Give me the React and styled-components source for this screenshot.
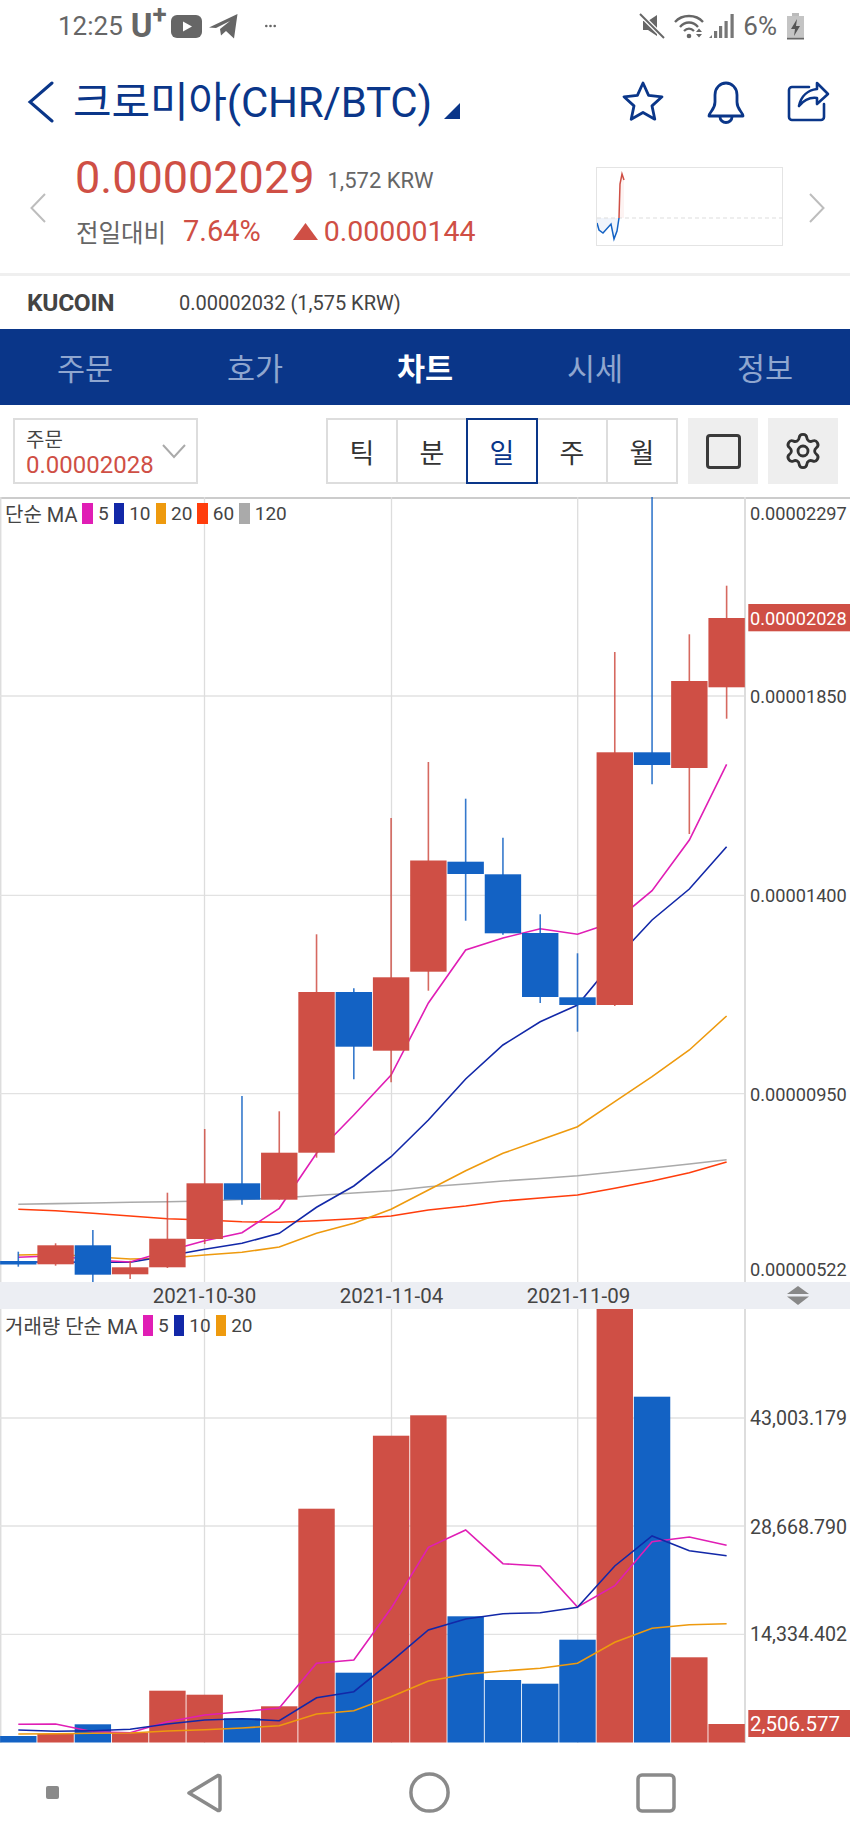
import React from 'react'
import styled, { createGlobalStyle } from 'styled-components'
import { Settings } from 'lucide-react'

const NAVY = '#0a3689'
const RED = '#cf4f45'
const BLUE = '#1362c4'
const TEXT = '#444'
const FONT = 'Roboto, "Noto Sans CJK KR", sans-serif'

const MA_COLORS = { 5: '#e01eb5', 10: '#1228a8', 20: '#ee9a0e', 60: '#ff3d0c', 120: '#aaaaaa' }

// x position of a day slot, slots are 37.28px wide
const slotX = (i) => 18.3 + 37.28 * i

// [open/close top, bottom, wick top, wick bottom, colour]
const candles = [
  [1261, 1264.5, 1251.7, 1266.7, 'b'],
  [1245.3, 1264.3, 1243.3, 1265.7, 'r'],
  [1245.3, 1274.7, 1230, 1282, 'b'],
  [1267.3, 1274.3, 1260.7, 1279, 'r'],
  [1238.7, 1267.3, 1192.7, 1268, 'r'],
  [1183.3, 1239, 1129, 1244, 'r'],
  [1183.3, 1199.7, 1096, 1204.7, 'b'],
  [1152.7, 1199.7, 1111.3, 1199.7, 'r'],
  [992, 1152.7, 934.3, 1157.7, 'r'],
  [992, 1046.7, 988.3, 1079.3, 'b'],
  [977.3, 1050.7, 818, 1082.3, 'r'],
  [860.5, 971.7, 762, 990.7, 'r'],
  [861.7, 874, 798.7, 920.7, 'b'],
  [874.3, 933.3, 837.7, 934.7, 'b'],
  [933, 997, 914.3, 1003, 'b'],
  [997.3, 1005, 953.3, 1031.7, 'b'],
  [752.3, 1005, 652, 1006, 'r'],
  [752.3, 765, 497, 784.3, 'b'],
  [681, 768, 634.3, 834, 'r'],
  [618, 687.3, 585.7, 718.7, 'r'],
]

const priceLines = [
  { color: MA_COLORS[120], ys: [1204.3, 1203.6, 1203, 1202.3, 1201.7, 1201, 1199.5, 1198, 1195.5, 1193, 1190.7, 1186.7, 1184, 1181, 1178.5, 1175.7, 1172, 1168, 1164, 1159.7] },
  { color: MA_COLORS[60], ys: [1209.3, 1210.7, 1213.3, 1216, 1218.7, 1220, 1221.7, 1222.3, 1220.7, 1218.7, 1216, 1210, 1206, 1201, 1198, 1195, 1188.3, 1181, 1172.7, 1162] },
  { color: MA_COLORS[20], ys: [1255, 1254.3, 1256.7, 1259, 1258.3, 1255, 1252.3, 1247, 1233.3, 1223.3, 1209.3, 1190, 1170.7, 1153.3, 1140, 1126.7, 1101.7, 1076.7, 1050, 1016] },
  { color: MA_COLORS[10], ys: [1262, 1262, 1262.3, 1262.3, 1256, 1249.3, 1243.3, 1233.3, 1207.3, 1186, 1156.7, 1120, 1079, 1045, 1021.7, 1005, 960, 920, 889, 846.7] },
  { color: MA_COLORS[5], ys: [1257.3, 1255.7, 1260, 1262, 1251, 1240.7, 1232.7, 1208.3, 1153.3, 1115, 1075, 1003, 950, 938, 928.7, 934.3, 921.7, 890.7, 840, 764.3] },
]

const volumes = [
  [1736, 'b'], [1734, 'r'], [1724.3, 'b'], [1732.7, 'r'], [1690.7, 'r'], [1694.7, 'r'], [1718.3, 'b'],
  [1706.3, 'r'], [1508.7, 'r'], [1672.7, 'b'], [1435.7, 'r'], [1415.3, 'r'], [1616.3, 'b'], [1680, 'b'],
  [1683.7, 'b'], [1639.7, 'b'], [1300, 'r'], [1396.7, 'b'], [1657.3, 'r'], [1724, 'r'],
]

const volumeLines = [
  { color: MA_COLORS[5], ys: [1724.3, 1724, 1731.7, 1732.7, 1721.7, 1715, 1711.7, 1708, 1663.3, 1660, 1608.3, 1547.3, 1530, 1563.7, 1566, 1607, 1585.7, 1541.7, 1537, 1545.3] },
  { color: MA_COLORS[10], ys: [1730, 1731.3, 1730.7, 1729.3, 1724, 1720, 1718.7, 1720.7, 1697.7, 1691.7, 1661.7, 1630, 1619, 1613.7, 1612.7, 1607.3, 1566, 1536, 1550.7, 1555.7] },
  { color: MA_COLORS[20], ys: [1734, 1733.7, 1733.3, 1733, 1731, 1729.7, 1728, 1725.7, 1714, 1710.7, 1696.7, 1681, 1674.3, 1671, 1668.3, 1663.3, 1642.3, 1628.3, 1624.7, 1623.7] },
]

const toPoints = (ys) => ys.map((y, i) => `${slotX(i)},${y}`).join(' ')

const GlobalStyle = createGlobalStyle`
  html, body { margin: 0; padding: 0; background: #fff; }
  body { font-family: ${FONT}; overflow: hidden; }
`

const Page = styled.div`
  width: 850px;
  height: 1842px;
  background: #fff;
  display: flex;
  flex-direction: column;
  overflow: hidden;
`

const StatusBar = styled.div`
  height: 52px;
  display: flex;
  align-items: center;
  padding: 0 46px 0 58px;
  color: #666;
  font-size: 26px;
`

const StatusGroup = styled.div`
  display: flex;
  align-items: center;
  margin-left: ${(p) => (p.$right ? 'auto' : `${p.$left || 0}px`)};
`

const Carrier = styled.span`
  display: inline-flex;
  align-items: flex-start;
  font-weight: 700;
  font-size: 33px;
  line-height: 30px;
  margin: 0 4px 0 8px;
  & > sup {
    font-size: 26px;
    line-height: 20px;
    margin: -7px 0 0 0;
    vertical-align: baseline;
  }
`

const TitleRow = styled.div`
  height: 100px;
  display: flex;
  align-items: center;
  padding: 0 19px 0 27px;
  color: ${NAVY};
`

const Title = styled.h1`
  margin: 1px 0 0 19px;
  font-size: 42px;
  font-weight: 400;
  line-height: 50px;
  letter-spacing: -0.2px;
  white-space: nowrap;
`

const TitleCaret = styled.svg`
  margin: 18px 0 0 12px;
`

const TitleActions = styled.div`
  margin-left: auto;
  display: flex;
  align-items: center;
  gap: 41px;
`

const PriceBlock = styled.div`
  height: 121px;
  display: flex;
  align-items: flex-start;
  padding: 0 25px 0 30px;
`

const SideChevron = styled.svg`
  margin-top: 41px;
  flex: none;
`

const PriceText = styled.div`
  margin-left: 29px;
  flex: 1;
`

const PriceRow = styled.div`
  height: 52px;
  display: flex;
  align-items: center;
`

const Price = styled.span`
  color: ${RED};
  font-size: 45px;
  line-height: 52px;
`

const PriceKrw = styled.span`
  color: #666;
  font-size: 22px;
  margin: 5px 0 0 13px;
`

const ChangeRow = styled.div`
  margin-top: 7px;
  height: 40px;
  display: flex;
  align-items: center;
  color: ${RED};
  font-size: 29px;
`

const ChangeLabel = styled.span`
  color: #666;
  font-size: 24.5px;
  width: 107px;
  padding-left: 1px;
`

const ChangeUp = styled.svg`
  margin: 0 6px 0 32px;
`

const ChangeValue = styled.span`
  font-size: 28.5px;
`

const MiniChart = styled.div`
  width: 185px;
  height: 77px;
  margin: 15px 26px 0 0;
  border: 1px solid #e4e4e4;
  flex: none;
  & > svg { display: block; }
`

const ExchangeRow = styled.div`
  height: 53px;
  border-top: 3px solid #efefef;
  display: flex;
  align-items: center;
  padding-left: 27px;
  color: ${TEXT};
`

const ExchangeName = styled.strong`
  width: 152px;
  font-size: 24.5px;
  letter-spacing: -0.3px;
`

const ExchangePrice = styled.span`
  font-size: 20px;
`

const TabBar = styled.nav`
  height: 76px;
  background: ${NAVY};
  display: flex;
`

const Tab = styled.div`
  flex: 1;
  display: flex;
  align-items: center;
  justify-content: center;
  font-size: 30.5px;
  color: ${(p) => (p.$active ? '#fff' : '#8fa6cf')};
  font-weight: ${(p) => (p.$active ? 700 : 400)};
`

const Toolbar = styled.div`
  height: 92px;
  box-sizing: border-box;
  padding: 13px 12px 0 13px;
  display: flex;
  align-items: flex-start;
`

const OrderSelect = styled.div`
  width: 185px;
  height: 66px;
  box-sizing: border-box;
  border: 2px solid #ddd;
  padding: 8px 0 0 11px;
  position: relative;
`

const OrderLabel = styled.div`
  font-size: 20px;
  line-height: 24px;
  color: ${TEXT};
`

const OrderValue = styled.div`
  font-size: 24px;
  line-height: 26px;
  color: ${RED};
`

const OrderCaret = styled.svg`
  position: absolute;
  right: 10px;
  top: 24px;
`

const Segment = styled.div`
  margin-left: auto;
  display: flex;
`

const SegmentCell = styled.div`
  width: 72px;
  height: 66px;
  box-sizing: border-box;
  margin-left: ${(p) => (p.$first ? 0 : -2)}px;
  border: 2px solid ${(p) => (p.$active ? NAVY : '#ddd')};
  display: flex;
  align-items: center;
  justify-content: center;
  font-size: 27px;
  color: ${(p) => (p.$active ? NAVY : '#333')};
  position: relative;
  z-index: ${(p) => (p.$active ? 1 : 0)};
`

const ToolButton = styled.div`
  width: 70px;
  height: 66px;
  margin-left: 10px;
  background: #eee;
  display: flex;
  align-items: center;
  justify-content: center;
  color: #333;
`

const ExpandBox = styled.div`
  width: 35px;
  height: 35px;
  box-sizing: border-box;
  border: 3px solid #3a3a3a;
  border-radius: 4px;
`

const ChartPane = styled.div`
  position: relative;
  height: ${(p) => p.$height}px;
  & > svg { display: block; }
`

const Legend = styled.div`
  position: absolute;
  left: 5px;
  top: ${(p) => p.$top}px;
  height: 21px;
  display: flex;
  align-items: center;
  gap: 5px;
  font-size: 19px;
  color: ${TEXT};
`

const LegendLabel = styled.span`
  font-size: 20px;
  white-space: nowrap;
`

const Swatch = styled.span`
  width: 10.5px;
  height: 21px;
  background: ${(p) => p.$color};
`

const AxisText = styled.text`
  font-family: ${FONT};
  font-size: ${(p) => p.$size || 18.2}px;
  fill: ${(p) => (p.$badge ? '#fff' : TEXT)};
  dominant-baseline: central;
`

const SeparatorBar = styled.div`
  height: 27px;
  background: #eceef3;
  display: flex;
  align-items: center;
  padding: 0 41px 0 111px;
  font-size: 20.5px;
  color: ${TEXT};
`

const DateTick = styled.span`
  width: 187px;
  text-align: center;
`

const ResizeHandle = styled.svg`
  margin-left: auto;
`

const SystemNav = styled.div`
  flex: 1;
  display: flex;
  align-items: center;
  padding-left: 46px;
`

const SystemIcon = styled.svg`
  margin-left: ${(p) => p.$left || 0}px;
  flex: none;
`

function MainChart() {
  return (
    <svg width="850" height="785" viewBox="0 497 850 785">
      <line x1="0" y1="498" x2="850" y2="498" stroke="#ccc" strokeWidth="2" />
      <line x1="0.7" y1="497" x2="0.7" y2="1282" stroke="#ddd" strokeWidth="1.5" />
      {[696, 895.3, 1093.7].map((y) => (
        <line key={y} x1="0" y1={y} x2="745" y2={y} stroke="#e2e2e2" strokeWidth="1.3" />
      ))}
      {[204.5, 391.5, 577.7].map((x) => (
        <line key={x} x1={x} y1="497" x2={x} y2="1282" stroke="#ddd" strokeWidth="1.3" />
      ))}
      <line x1="745" y1="497" x2="745" y2="1282" stroke="#ddd" strokeWidth="2" />
      {priceLines.map((l) => (
        <polyline key={l.color} points={toPoints(l.ys)} fill="none" stroke={l.color} strokeWidth="1.6" />
      ))}
      {candles.map(([top, bottom, high, low, c], i) => {
        const color = c === 'r' ? RED : BLUE
        return (
          <g key={i}>
            <line x1={slotX(i)} y1={high} x2={slotX(i)} y2={low} stroke={color} strokeWidth="1.6" opacity="0.85" />
            <rect x={slotX(i) - 18.2} y={top} width="36.4" height={bottom - top} fill={color} />
          </g>
        )
      })}
      <AxisText x="750" y="513">0.00002297</AxisText>
      <AxisText x="750" y="696">0.00001850</AxisText>
      <AxisText x="750" y="895">0.00001400</AxisText>
      <AxisText x="750" y="1094">0.00000950</AxisText>
      <AxisText x="750" y="1269">0.00000522</AxisText>
      <rect x="748.3" y="604" width="102" height="27.3" fill={RED} />
      <AxisText x="750" y="618" $badge>0.00002028</AxisText>
    </svg>
  )
}

function VolumeChart() {
  return (
    <svg width="850" height="434" viewBox="0 1309 850 434">
      <line x1="0.7" y1="1309" x2="0.7" y2="1743" stroke="#ddd" strokeWidth="1.5" />
      {[1418, 1526, 1634.3].map((y) => (
        <line key={y} x1="0" y1={y} x2="745" y2={y} stroke="#e2e2e2" strokeWidth="1.3" />
      ))}
      {[204.5, 391.5, 577.7].map((x) => (
        <line key={x} x1={x} y1="1309" x2={x} y2="1743" stroke="#ddd" strokeWidth="1.3" />
      ))}
      <line x1="745" y1="1309" x2="745" y2="1743" stroke="#ddd" strokeWidth="2" />
      {volumes.map(([top, c], i) => (
        <rect key={i} x={slotX(i) - 18.2} y={top} width="36.4" height={1742.5 - top} fill={c === 'r' ? RED : BLUE} />
      ))}
      {volumeLines.map((l) => (
        <polyline key={l.color} points={toPoints(l.ys)} fill="none" stroke={l.color} strokeWidth="1.6" />
      ))}
      <AxisText x="750" y="1418" $size={19.6}>43,003.179</AxisText>
      <AxisText x="750" y="1527" $size={19.6}>28,668.790</AxisText>
      <AxisText x="750" y="1634" $size={19.6}>14,334.402</AxisText>
      <rect x="748.3" y="1710" width="102" height="27" fill={RED} />
      <AxisText x="750" y="1724" $badge $size={20.5}>2,506.577</AxisText>
    </svg>
  )
}

function ChartLegend({ label, periods, top }) {
  return (
    <Legend $top={top}>
      <LegendLabel>{label}</LegendLabel>
      {periods.map((p) => (
        <React.Fragment key={p}>
          <Swatch $color={MA_COLORS[p]} />
          <span>{p}</span>
        </React.Fragment>
      ))}
    </Legend>
  )
}

function StatusIcons() {
  return (
    <StatusGroup $right>
      {/* muted speaker */}
      <svg width="26" height="26" viewBox="0 0 26 26">
        <path d="M4 8h5l9-6v21l-9-6H4z" fill="#666" />
        <line x1="1" y1="1" x2="25" y2="25" stroke="#fff" strokeWidth="4.5" />
        <line x1="1" y1="1" x2="25" y2="25" stroke="#666" strokeWidth="2" />
      </svg>
      {/* wifi */}
      <svg width="30" height="26" viewBox="0 0 30 26" style={{ marginLeft: 9 }} fill="none" stroke="#666" strokeWidth="2.3">
        <path d="M1 9 C8 1 22 1 29 9" />
        <path d="M6 14 C11 8 19 8 24 14" />
        <path d="M10 18 C13 15 17 15 20 18" />
        <circle cx="15" cy="23" r="2.3" fill="#666" stroke="none" />
        <path d="M22 19h6l-3-3.500z M22 21h6l-3 3.500z" fill="#666" stroke="none" />
      </svg>
      {/* signal */}
      <svg width="26" height="26" viewBox="0 0 26 26" style={{ marginLeft: 5 }} fill="#777">
        <path d="M0 25l3-3v3z" />
        <rect x="5" y="18" width="3.200" height="7" />
        <rect x="10" y="13" width="3.200" height="12" />
        <rect x="15.500" y="8" width="3.200" height="17" />
        <rect x="21.500" y="1" width="3.200" height="24" />
      </svg>
      <span style={{ marginLeft: 8 }}>6%</span>
      {/* charging battery */}
      <svg width="17" height="27" viewBox="0 0 17 27" style={{ marginLeft: 10 }}>
        <rect x="5" y="0" width="7" height="3" fill="#bbb" />
        <rect x="0" y="3" width="17" height="21" fill="#c4c4c4" />
        <rect x="0" y="24.500" width="17" height="2" fill="#666" />
        <path d="M10 6L4 16h4l-1 7 6-10H9z" fill="#555" />
      </svg>
    </StatusGroup>
  )
}

export default function App() {
  return (
    <Page>
      <GlobalStyle />
      <StatusBar>
        <span>12:25</span>
        <Carrier>U<sup>+</sup></Carrier>
        {/* youtube */}
        <svg width="31" height="23" viewBox="0 0 31 23">
          <rect width="31" height="23" rx="6" fill="#666" />
          <path d="M12 6.500l9 5-9 5z" fill="#fff" />
        </svg>
        {/* telegram */}
        <svg width="29" height="25" viewBox="0 0 29 25" style={{ marginLeft: 7 }}>
          <path d="M0 13.500L28.500 0 25 24.500l-8-7.500-5 4.500-1-6.500 10-8-14 7z" fill="#666" />
        </svg>
        <StatusGroup $left={27}>
          <svg width="11" height="4" viewBox="0 0 11 4" fill="#666">
            <circle cx="1.300" cy="2" r="1.300" />
            <circle cx="5.500" cy="2" r="1.300" />
            <circle cx="9.700" cy="2" r="1.300" />
          </svg>
        </StatusGroup>
        <StatusIcons />
      </StatusBar>

      <TitleRow>
        <svg width="27" height="42" viewBox="0 0 27 42" fill="none" stroke={NAVY} strokeWidth="3" strokeLinecap="round">
          <path d="M25 2L3 21l22 19" />
        </svg>
        <Title>크로미아(CHR/BTC)</Title>
        <TitleCaret width="16" height="16" viewBox="0 0 16 16">
          <path d="M16 0v16H0z" fill={NAVY} />
        </TitleCaret>
        <TitleActions>
          <svg width="44" height="44" viewBox="0 0 44 44" fill="none" stroke={NAVY} strokeWidth="2.800" strokeLinejoin="round">
            <polygon points="22,3 27.600,15.300 41,16.800 31,25.900 33.800,39.200 22,32.500 10.200,39.200 13,25.900 3,16.800 16.400,15.300" />
          </svg>
          <svg width="40" height="43" viewBox="0 0 40 43" fill="none" stroke={NAVY} strokeWidth="2.800" strokeLinejoin="round">
            <path d="M3 35C3 31 9 29 9 21V14C9 7 14 2 20 2s11 5 11 12v7c0 8 6 10 6 14z" />
            <path d="M14 36a6 5.500 0 0 0 12 0" />
          </svg>
          <svg width="44" height="42" viewBox="0 0 44 42" fill="none" stroke={NAVY} strokeWidth="2.600" strokeLinejoin="round">
            <path d="M22 6H5a3 3 0 0 0-3 3v27a3 3 0 0 0 3 3h29a3 3 0 0 0 3-3V23" strokeLinecap="round" />
            <path d="M12 25C14 15 21 9 30 8V2l11 11-11 10v-6C23 16 17 19 12 25z" />
          </svg>
        </TitleActions>
      </TitleRow>

      <PriceBlock>
        <SideChevron width="16" height="30" viewBox="0 0 16 30" fill="none" stroke="#bdbdbd" strokeWidth="2">
          <path d="M15 1L1.500 15 15 29" />
        </SideChevron>
        <PriceText>
          <PriceRow>
            <Price>0.00002029</Price>
            <PriceKrw>1,572 KRW</PriceKrw>
          </PriceRow>
          <ChangeRow>
            <ChangeLabel>전일대비</ChangeLabel>
            <span>7.64%</span>
            <ChangeUp width="25" height="17" viewBox="0 0 25 17">
              <path d="M12.500 0L25 17H0z" fill={RED} />
            </ChangeUp>
            <ChangeValue>0.00000144</ChangeValue>
          </ChangeRow>
        </PriceText>
        <MiniChart>
          <svg width="185" height="77" viewBox="0 0 185 77">
            <path d="M0 50V55l2 7 4 3 8-9 3 15 3-8 2-13z" fill="#f0f4fb" />
            <path d="M22 50l1-34 2-10 2 6v38z" fill="#fdf3f2" />
            <line x1="0" y1="50" x2="185" y2="50" stroke="#ddd" strokeWidth="1" strokeDasharray="4 3" />
            <polyline points="0,55 2,62 6,65 14,56 17,71 20,63 22,50" fill="none" stroke={BLUE} strokeWidth="1.500" />
            <polyline points="22,50 23,16 25,6 27,12" fill="none" stroke={RED} strokeWidth="1.500" />
          </svg>
        </MiniChart>
        <SideChevron width="16" height="30" viewBox="0 0 16 30" fill="none" stroke="#bdbdbd" strokeWidth="2">
          <path d="M1 1l13.500 14L1 29" />
        </SideChevron>
      </PriceBlock>

      <ExchangeRow>
        <ExchangeName>KUCOIN</ExchangeName>
        <ExchangePrice>0.00002032 (1,575 KRW)</ExchangePrice>
      </ExchangeRow>

      <TabBar>
        <Tab>주문</Tab>
        <Tab>호가</Tab>
        <Tab $active>차트</Tab>
        <Tab>시세</Tab>
        <Tab>정보</Tab>
      </TabBar>

      <Toolbar>
        <OrderSelect>
          <OrderLabel>주문</OrderLabel>
          <OrderValue>0.00002028</OrderValue>
          <OrderCaret width="24" height="15" viewBox="0 0 24 15" fill="none" stroke="#aaa" strokeWidth="2">
            <path d="M1 1l11 12L23 1" />
          </OrderCaret>
        </OrderSelect>
        <Segment>
          <SegmentCell $first>틱</SegmentCell>
          <SegmentCell>분</SegmentCell>
          <SegmentCell $active>일</SegmentCell>
          <SegmentCell>주</SegmentCell>
          <SegmentCell>월</SegmentCell>
        </Segment>
        <ToolButton>
          <ExpandBox />
        </ToolButton>
        <ToolButton>
          <Settings size={40} strokeWidth={1.7} />
        </ToolButton>
      </Toolbar>

      <ChartPane $height={785}>
        <MainChart />
        <ChartLegend label="단순 MA" periods={[5, 10, 20, 60, 120]} top={6} />
      </ChartPane>

      <SeparatorBar>
        <DateTick>2021-10-30</DateTick>
        <DateTick>2021-11-04</DateTick>
        <DateTick>2021-11-09</DateTick>
        <ResizeHandle width="22" height="19" viewBox="0 0 22 19" fill="#888">
          <path d="M11 0l11 8H0z" />
          <path d="M0 10.500h22L11 19z" />
        </ResizeHandle>
      </SeparatorBar>

      <ChartPane $height={434}>
        <VolumeChart />
        <ChartLegend label="거래량 단순 MA" periods={[5, 10, 20]} top={6} />
      </ChartPane>

      <SystemNav>
        <SystemIcon width="13" height="13" viewBox="0 0 13 13">
          <rect width="13" height="13" rx="2" fill="#8a8a8a" />
        </SystemIcon>
        <SystemIcon $left={127} width="36" height="40" viewBox="0 0 36 40">
          <path d="M3 20L32 2.500a1.500 1.500 0 0 1 2 1.500v32a1.500 1.500 0 0 1-2 1.500z" fill="none" stroke="#8a8a8a" strokeWidth="3.500" strokeLinejoin="round" />
        </SystemIcon>
        <SystemIcon $left={187} width="41" height="41" viewBox="0 0 41 41">
          <circle cx="20.500" cy="20.500" r="18.600" fill="none" stroke="#8a8a8a" strokeWidth="3.500" />
        </SystemIcon>
        <SystemIcon $left={186} width="40" height="40" viewBox="0 0 40 40">
          <rect x="2" y="2" width="36" height="36" rx="4" fill="none" stroke="#8a8a8a" strokeWidth="3.500" />
        </SystemIcon>
      </SystemNav>
    </Page>
  )
}
